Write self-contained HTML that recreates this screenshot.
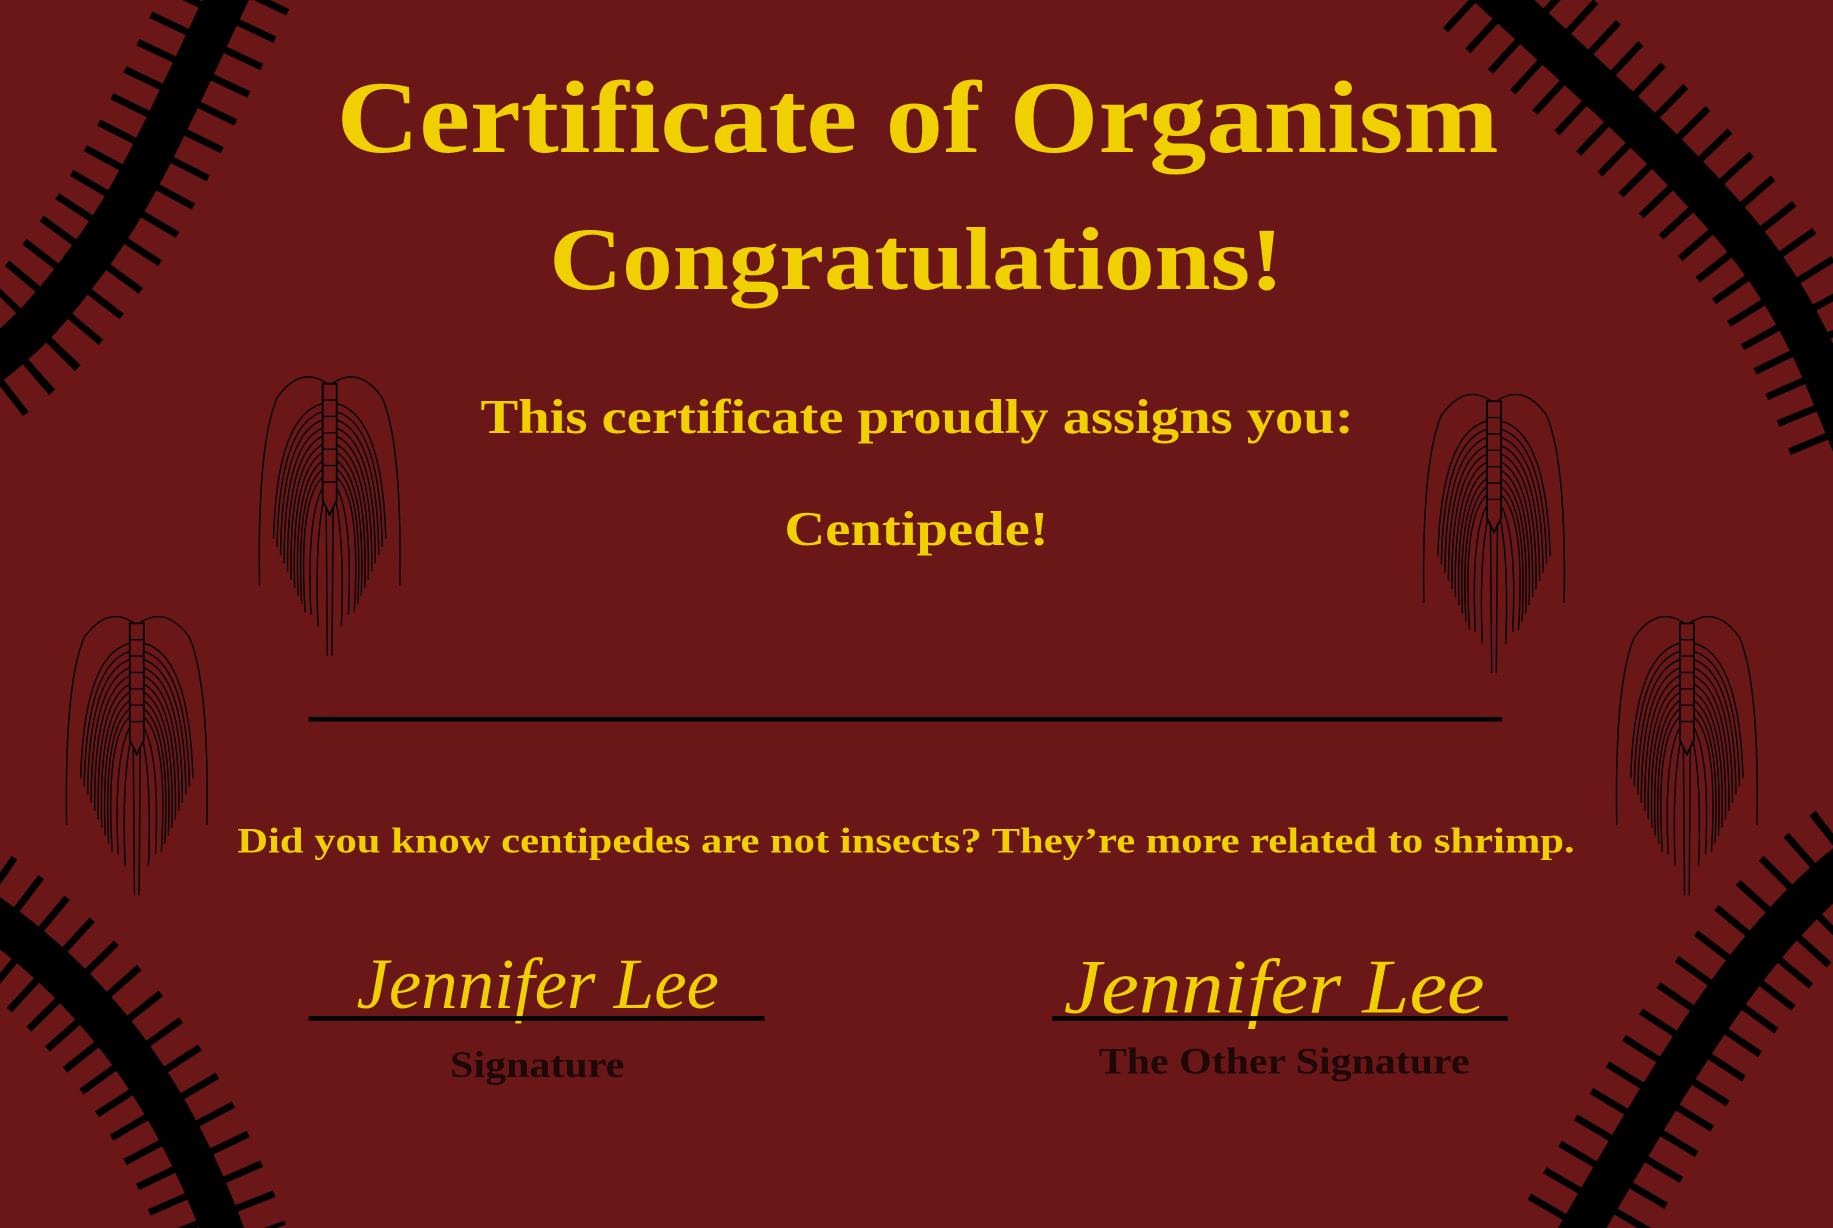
<!DOCTYPE html>
<html><head><meta charset="utf-8"><style>
html,body{margin:0;padding:0;background:#6b1718;overflow:hidden}
svg{display:block}
</style></head><body>
<svg width="1833" height="1228" viewBox="0 0 1568 1050" xmlns="http://www.w3.org/2000/svg">
<defs>
<g id="cp" fill="none" stroke="#000" stroke-width="1.2" stroke-linecap="round">
 <g id="half">
  <path d="M-2,8 Q-25,-8 -45,20 Q-62,60 -60,180"/>
  <path d="M-6,25 Q-45,35 -48,140"/><path d="M-6,32 Q-43,43 -45,147"/>
  <path d="M-6,39 Q-41,51 -42,154"/><path d="M-6,46 Q-39,59 -39,161"/>
  <path d="M-6,53 Q-37,67 -36,168"/><path d="M-6,60 Q-35,75 -33,175"/>
  <path d="M-6,67 Q-33,83 -30,182"/><path d="M-6,74 Q-31,91 -27,189"/>
  <path d="M-6,81 Q-29,99 -24,196"/><path d="M-6,88 Q-27,107 -21,203"/>
  <path d="M-5,95 Q-20,120 -16,205"/><path d="M-4,102 Q-13,140 -10,215"/>
  <path d="M-3,110 L-2,240"/>
 </g>
 <use href="#half" transform="scale(-1,1)"/>
 <path d="M-6,8 h12 v100 l-6,12 l-6,-12 z" fill="#6b1718" stroke-width="1.5"/>
 <path d="M-6,22 h12 M-6,36 h12 M-6,50 h12 M-6,64 h12 M-6,78 h12 M-6,92 h12"/>
</g>
</defs>
<rect width="1568" height="1050" fill="#6b1718"/>
<g fill="none" stroke="#000">
 <g stroke-width="105" stroke-dasharray="6 20">
  <path d="M200,-15 C150,90 120,160 80,215 S20,290 -20,320"/>
  <path d="M-20,775 C60,830 140,910 195,1065"/>
  <path d="M1270,-15 C1340,50 1420,120 1480,190 S1560,320 1585,380"/>
  <path d="M1585,735 C1500,800 1440,900 1345,1065"/>
 </g>
 <g stroke-width="36" stroke-linecap="round">
  <path d="M200,-15 C150,90 120,160 80,215 S20,290 -20,320"/>
  <path d="M-20,775 C60,830 140,910 195,1065"/>
  <path d="M1270,-15 C1340,50 1420,120 1480,190 S1560,320 1585,380"/>
  <path d="M1585,735 C1500,800 1440,900 1345,1065"/>
 </g>
</g>
<use href="#cp" transform="translate(282,320)"/>
<use href="#cp" transform="translate(1278,335)"/>
<use href="#cp" transform="translate(117,525)"/>
<use href="#cp" transform="translate(1443,525)"/>
<g font-family="Liberation Serif, serif" fill="#f0d000" font-weight="bold">
 <text x="288" y="130" font-size="88" textLength="994" lengthAdjust="spacingAndGlyphs">Certificate of Organism</text>
 <text x="470" y="247" font-size="76" textLength="628" lengthAdjust="spacingAndGlyphs">Congratulations!</text>
 <text x="411" y="370" font-size="42" textLength="747" lengthAdjust="spacingAndGlyphs">This certificate proudly assigns you:</text>
 <text x="671" y="466" font-size="42" textLength="226" lengthAdjust="spacingAndGlyphs">Centipede!</text>
 <text x="203" y="729" font-size="31" textLength="1144" lengthAdjust="spacingAndGlyphs">Did you know centipedes are not insects? They’re more related to shrimp.</text>
</g>
<g font-family="Liberation Serif, serif" fill="#f0d000" font-style="italic">
 <text x="305" y="862" font-size="62" textLength="310" lengthAdjust="spacingAndGlyphs">Jennifer Lee</text>
 <text x="910" y="866" font-size="66" textLength="360" lengthAdjust="spacingAndGlyphs">Jennifer Lee</text>
</g>
<rect x="264" y="613" width="1021" height="4" fill="#000"/>
<rect x="264" y="869" width="390" height="4" fill="#000"/>
<rect x="900" y="869" width="390" height="4" fill="#000"/>
<g font-family="Liberation Serif, serif" fill="#1e0808" font-weight="bold" font-size="32">
 <text x="385" y="921" textLength="149" lengthAdjust="spacingAndGlyphs">Signature</text>
 <text x="940" y="918" textLength="317" lengthAdjust="spacingAndGlyphs">The Other Signature</text>
</g>
</svg>
</body></html>
